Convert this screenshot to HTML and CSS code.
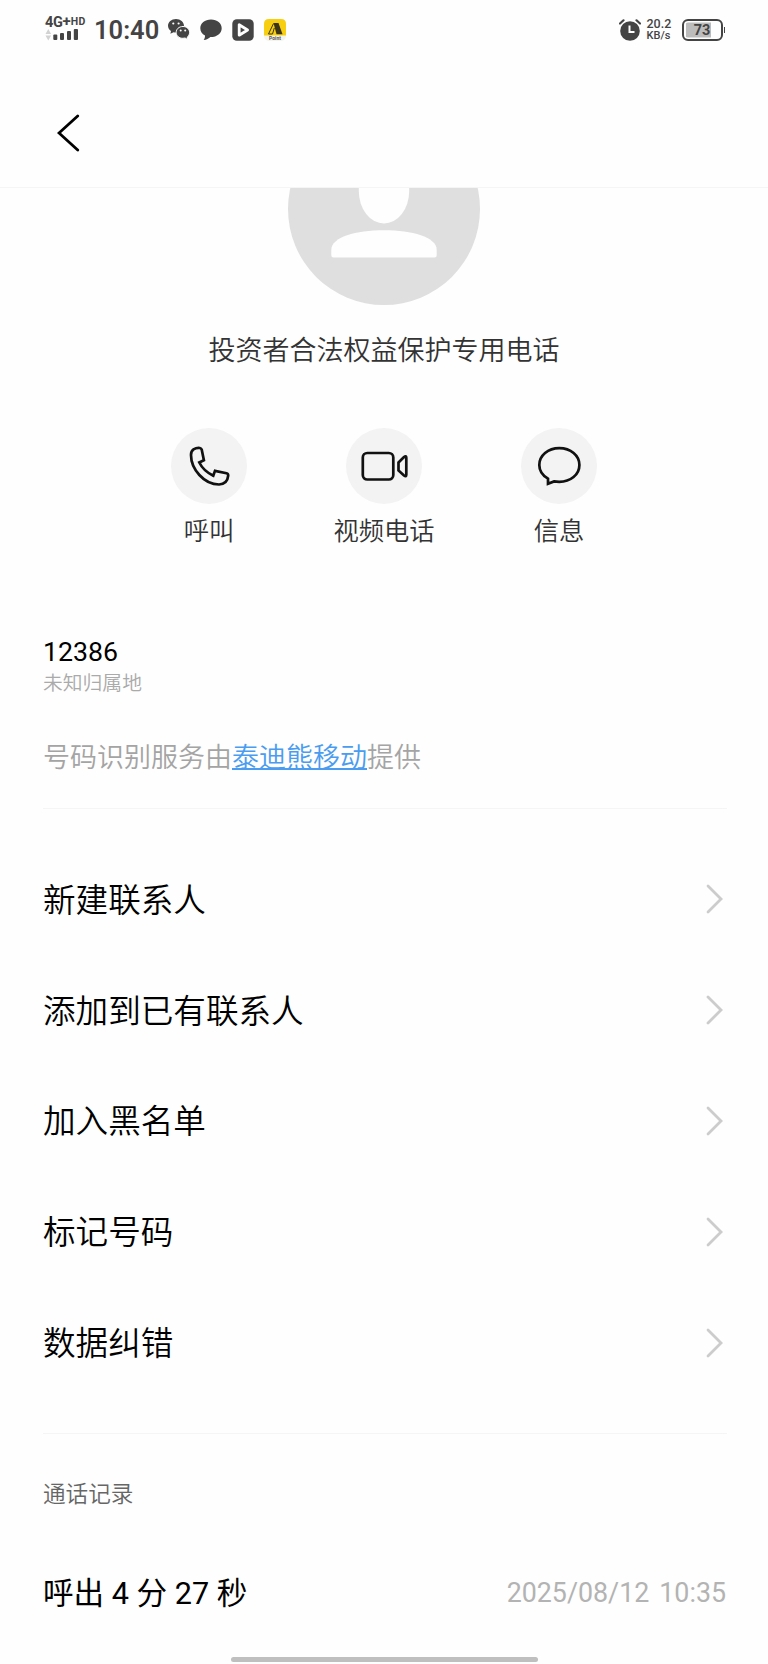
FILE: index.html
```html
<!DOCTYPE html>
<html lang="zh-CN">
<head>
    <meta charset="UTF-8">
    <meta name="viewport" content="width=device-width, initial-scale=1.0">
    <title>联系人详情</title>
    <link rel="stylesheet" href="styles.css">
</head>
<body>
    <!-- Status bar -->
    <div class="status-bar">
        <div class="network">
            <div class="network-type"><span class="net-4g">4G</span><span class="net-plus">+</span><span class="net-hd">HD</span></div>
            <svg class="signal" width="36" height="12" viewBox="0 0 36 12">
                <path d="M0.500 5L3.300 0L6.100 5ZM0.500 6.500L3.300 11.500L6.100 6.500Z" fill="#d2d2d2"/>
                <g fill="#444">
                    <rect x="8.300" y="5.500" width="4" height="5.500" rx="1"/>
                    <rect x="15" y="4" width="4" height="7" rx="1"/>
                    <rect x="22" y="2" width="4" height="9" rx="1"/>
                    <rect x="28.800" y="0" width="4.200" height="11" rx="1"/>
                </g>
            </svg>
        </div>
        <div class="time">10:40</div>
        <div class="status-icons">
            <svg width="22" height="22" viewBox="0 0 22 22">
                <path d="M8 0C3.400 0 0 3 0 6.800C0 9 1.200 10.900 3 12.100L2.400 14.800L5.600 13.200C6.500 13.400 7.300 13.500 8 13.500C12.500 13.500 16 10.600 16 6.800C16 3 12.500 0 8 0Z" fill="#444"/>
                <path d="M15 7.500C10.900 7.500 8.200 10.100 8.200 13.400C8.200 16.700 11 19.300 14.900 19.300C15.700 19.300 16.400 19.200 17.100 19L19.700 20.600L19.200 18.200C20.700 17.100 21.600 15.400 21.600 13.400C21.600 10.100 18.700 7.500 15 7.500Z" fill="#444" stroke="#fefefe" stroke-width="1"/>
                <g fill="#fefefe">
                    <circle cx="5.300" cy="4.500" r="1.100"/>
                    <circle cx="10.600" cy="4.500" r="1.100"/>
                    <circle cx="12.700" cy="11.600" r="1"/>
                    <circle cx="17.200" cy="11.600" r="1"/>
                </g>
            </svg>
            <svg width="22" height="22" viewBox="0 0 22 22">
                <path d="M11 0.500C4.800 0.500 0.300 4.200 0.300 9.200C0.300 12.300 2 15 5 16.600C5.100 18.500 4.500 19.800 3.700 21C6.500 20.700 8.800 19.600 10.400 18C17 18.100 21.700 14.300 21.700 9.200C21.700 4.200 17.200 0.500 11 0.500Z" fill="#444"/>
            </svg>
            <svg width="22" height="22" viewBox="0 0 22 22">
                <rect x="0.300" y="0.300" width="21.400" height="21.400" rx="4.500" fill="#444"/>
                <path d="M7.200 5.800V16.200L15.600 11Z" fill="none" stroke="#fefefe" stroke-width="2.800" stroke-linejoin="round"/>
            </svg>
            <svg width="22" height="22" viewBox="0 0 22 22">
                <rect width="22" height="22" rx="5" fill="#f4f4ec"/>
                <path d="M0 16.500V5Q0 0 5 0H17Q22 0 22 5V16.500Z" fill="#f8cf10"/>
                <path d="M9.500 4H14.500L18.500 15.300H12.500Z" fill="#3c3417"/>
                <path d="M9.500 4.500L4.500 15H8.500L10.300 9" fill="none" stroke="#3c3417" stroke-width="1"/>
                <text class="app-label" x="11" y="20.800" text-anchor="middle">Point</text>
            </svg>
        </div>
        <div class="status-right">
            <svg width="22" height="22" viewBox="0 0 22 22">
                <circle cx="11" cy="12" r="9.800" fill="#444"/>
                <path d="M1 4.500L4.500 1.300M21 4.500L17.500 1.300" stroke="#444" stroke-width="2.200" stroke-linecap="round"/>
                <path d="M10.500 6.500V13H15.500" stroke="#fefefe" stroke-width="2" fill="none"/>
            </svg>
            <div class="speed"><span>20.2</span><span>KB/s</span></div>
            <div class="battery">
                <div class="battery-body">73</div>
                <div class="battery-tip"></div>
            </div>
        </div>
    </div>

    <!-- Title bar -->
    <header class="title-bar">
        <button class="back" aria-label="返回">
            <svg width="24" height="38" viewBox="0 0 24 38">
                <path d="M20.700 2L2 19L20.700 36" fill="none" stroke="#000" stroke-width="2.800" stroke-linecap="round"/>
            </svg>
        </button>
    </header>

    <!-- Profile -->
    <section class="profile">
        <svg class="avatar" width="192" height="117" viewBox="0 75 192 117">
            <circle cx="96" cy="96" r="96" fill="#dfdfdf"/>
            <ellipse cx="96" cy="78" rx="25.200" ry="32.500" fill="#fefefe"/>
            <path d="M43.300 142V137C43.300 124 68 117.300 96 117.300C124 117.300 148.700 124 148.700 137V142Q148.700 144.500 146.200 144.500H45.800Q43.300 144.500 43.300 142Z" fill="#fefefe"/>
        </svg>
        <h1 class="name">投资者合法权益保护专用电话</h1>
        <div class="actions">
            <div class="action">
                <div class="action-icon">
                    <svg width="76" height="76" viewBox="0 0 76 76">
                        <path d="M22.500 21.300Q25.500 19.600 28.800 20Q30.400 20.300 30.700 21.600L32.900 32.300L28.300 34.500Q32.500 43 42.300 47.700L44 42.900L55.500 45.300Q57.300 45.800 57.200 47.700C56.600 54 53.500 56.300 48 56.500C33 56.500 20 41 20 27Q20 23 22.500 21.300Z"/>
                    </svg>
                </div>
                <span>呼叫</span>
            </div>
            <div class="action">
                <div class="action-icon">
                    <svg width="76" height="76" viewBox="0 0 76 76">
                        <rect x="16.800" y="25" width="30.500" height="26.500" rx="4.500"/>
                        <path d="M52.500 34.500L58 29Q60.300 27.200 60.300 29.800V46.700Q60.300 49.300 58 47.500L52.500 42.500Z"/>
                    </svg>
                </div>
                <span>视频电话</span>
            </div>
            <div class="action">
                <div class="action-icon">
                    <svg width="76" height="76" viewBox="0 0 76 76">
                        <path d="M27 50.700C21.500 47.500 18.300 42.500 18.300 37C18.300 27.500 27 20.200 38.300 20.200C49.700 20.200 58.400 27.500 58.400 37C58.400 46.800 49.500 53.800 38.300 53.800Q35.500 53.800 33 53.400L27 55.700Z"/>
                    </svg>
                </div>
                <span>信息</span>
            </div>
        </div>
    </section>

    <!-- Number -->
    <section class="number-info">
        <div class="number">12386</div>
        <div class="location">未知归属地</div>
        <p class="provider">号码识别服务由<a href="#">泰迪熊移动</a>提供</p>
    </section>

    <!-- Menu -->
    <ul class="menu">
        <li>
            <span>新建联系人</span>
            <svg class="arrow" viewBox="0 0 17 30"><path d="M2 2L15 15L2 28"/></svg>
        </li>
        <li>
            <span>添加到已有联系人</span>
            <svg class="arrow" viewBox="0 0 17 30"><path d="M2 2L15 15L2 28"/></svg>
        </li>
        <li>
            <span>加入黑名单</span>
            <svg class="arrow" viewBox="0 0 17 30"><path d="M2 2L15 15L2 28"/></svg>
        </li>
        <li>
            <span>标记号码</span>
            <svg class="arrow" viewBox="0 0 17 30"><path d="M2 2L15 15L2 28"/></svg>
        </li>
        <li>
            <span>数据纠错</span>
            <svg class="arrow" viewBox="0 0 17 30"><path d="M2 2L15 15L2 28"/></svg>
        </li>
    </ul>

    <!-- Call log -->
    <section class="call-log">
        <h2>通话记录</h2>
        <div class="call">
            <span class="duration">呼出 4 分 27 秒</span>
            <span class="date"><span>2025/08/12</span><span>10:35</span></span>
        </div>
    </section>

    <div class="home-bar"></div>
</body>
</html>
```
FILE: styles.css
```css
* {
    box-sizing: border-box;
}

body {
    font-family: Roboto, 'Noto Sans CJK SC', sans-serif;
    display: flex;
    flex-direction: column;
    height: 1664px;
    margin: 0;
    overflow: hidden;
    background: #fefefe;
    color: #000;
}

svg {
    display: block;
    flex-shrink: 0;
}

/* Status bar */
.status-bar {
    display: flex;
    align-items: center;
    height: 60px;
    padding: 0 43px 0 45px;
    color: #444;
}

.network {
    width: 49px;
    padding-bottom: 2px;
}

.network-type {
    display: flex;
    height: 12px;
    font-weight: bold;
    line-height: 12px;
}

.net-4g {
    font-size: 14.5px;
    letter-spacing: -0.3px;
}

.net-plus {
    font-size: 15px;
    line-height: 8px;
}

.net-hd {
    font-size: 10.5px;
    line-height: 9px;
    letter-spacing: 0.4px;
}

.time {
    width: 74px;
    font-size: 25.5px;
    font-weight: 600;
    line-height: 60px;
}

.status-icons {
    display: flex;
    gap: 10px;
}

.app-label {
    font-size: 5px;
    font-weight: bold;
    fill: #555;
}

.status-right {
    display: flex;
    align-items: center;
    margin-left: auto;
}

.speed {
    display: flex;
    flex-direction: column;
    width: 36px;
    padding-left: 6px;
    font-size: 12.5px;
    font-weight: 500;
    line-height: 12px;
}

.speed span:last-child {
    font-size: 11px;
}

.battery {
    display: flex;
    align-items: center;
    gap: 1px;
    margin-left: 5px;
}

.battery-body {
    width: 41px;
    height: 22px;
    border: 2px solid #444;
    border-radius: 6px;
    background: linear-gradient(90deg, #bcbcbc 25px, #fefefe 25px) 2px 0 no-repeat;
    box-shadow: inset 0 0 0 1.5px #fefefe;
    font-size: 14.5px;
    font-weight: bold;
    line-height: 19px;
    text-align: center;
}

.battery-tip {
    width: 1.5px;
    height: 6px;
    background: #444;
}

/* Title bar */
.title-bar {
    display: flex;
    align-items: center;
    height: 128px;
    padding: 18px 0 0 57px;
    border-bottom: 1px solid #f5f5f5;
}

.back {
    padding: 0;
    border: none;
    background: none;
    cursor: pointer;
}

/* Profile */
.profile {
    display: flex;
    flex-direction: column;
    align-items: center;
}

.name {
    margin: 26px 0 0;
    color: #333;
    font-size: 27px;
    font-weight: 350;
    line-height: 40px;
}

.actions {
    display: flex;
    margin-top: 57px;
}

.action {
    display: flex;
    flex-direction: column;
    align-items: center;
    width: 175px;
    color: #333;
    font-size: 25.3px;
    font-weight: 350;
    line-height: 36px;
}

.action span {
    margin-top: 10px;
}

.action-icon {
    width: 76px;
    height: 76px;
    border-radius: 50%;
    background: #f3f3f3;
}

.action-icon svg {
    fill: none;
    stroke: #111;
    stroke-width: 2.7;
}

/* Number */
.number-info {
    height: 259px;
    margin: 0 41px 0 43px;
    padding-top: 86px;
    border-bottom: 1px solid #f5f5f5;
}

.number {
    font-size: 26.7px;
    line-height: 32px;
}

.location {
    margin-top: 2px;
    color: #aaa;
    font-size: 19.8px;
    font-weight: 350;
    line-height: 28px;
}

.provider {
    margin: 40px 0 0;
    color: #a4a4a4;
    font-size: 27px;
    font-weight: 350;
    line-height: 40px;
}

.provider a {
    color: #4a9cf0;
    text-decoration: underline;
    text-decoration-thickness: 1.5px;
}

/* Menu */
.menu {
    height: 625px;
    margin: 0 41px 0 43px;
    padding: 35px 0 0;
    border-bottom: 1px solid #f5f5f5;
    list-style: none;
}

.menu li {
    display: flex;
    align-items: center;
    justify-content: space-between;
    height: 110.8px;
    padding-right: 4px;
    font-size: 32.6px;
    font-weight: 350;
}

.menu li span {
    padding-bottom: 4px;
}

.arrow {
    width: 17px;
    height: 30px;
    fill: none;
    stroke: #ccc;
    stroke-width: 2.8;
    stroke-linecap: round;
}

/* Call log */
.call-log {
    padding: 44px 42px 0 43px;
}

.call-log h2 {
    margin: 0;
    color: #666;
    font-size: 22.6px;
    font-weight: 350;
    line-height: 34px;
}

.call {
    display: flex;
    align-items: center;
    justify-content: space-between;
    height: 44px;
    margin-top: 59px;
}

.duration {
    padding-bottom: 5px;
    font-size: 30.6px;
}

.date {
    display: flex;
    gap: 10px;
    color: #b3b3b3;
    font-size: 26.8px;
}

.home-bar {
    width: 307px;
    height: 5px;
    margin: auto auto 2px;
    border-radius: 3px;
    background: #bfbfbf;
}
```
